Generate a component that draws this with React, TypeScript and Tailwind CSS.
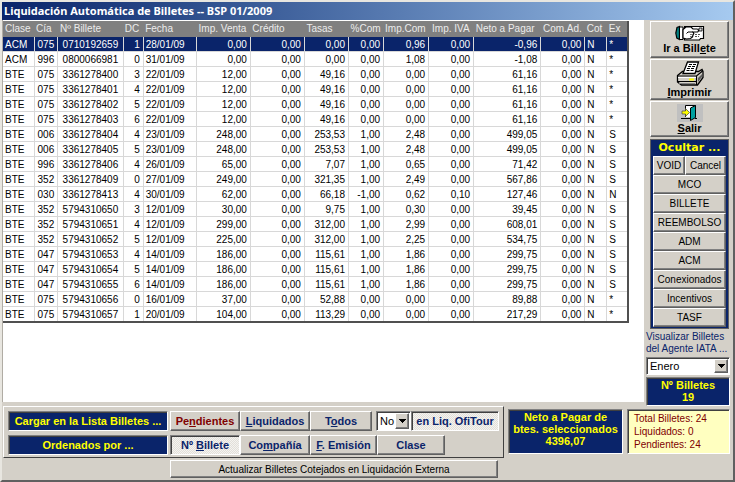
import type { ReactNode } from 'react'

type Row = [string, string, string, string, string, string, string, string, string, string, string, string, string, string, string]

const columns = [
  { title: 'Clase', col: 'w-[31px]', head: 'text-left pl-0.5', cell: 'pl-0.5' },
  { title: 'Cía', col: 'w-[23px]', head: 'text-left pl-0.5', cell: 'pl-[3px]' },
  { title: 'Nº Billete', col: 'w-[66px]', head: 'text-left pl-[3px]', cell: 'pl-[5px]' },
  { title: 'DC', col: 'w-[20px]', head: 'text-right pr-1', cell: 'text-right pr-[3px]' },
  { title: 'Fecha', col: 'w-[53px]', head: 'text-left pl-0.5', cell: 'pl-0.5' },
  { title: 'Imp. Venta', col: 'w-[54px]', head: 'text-right pr-1', cell: 'text-right pr-[3px]' },
  { title: 'Crédito', col: 'w-[54px]', head: 'text-left pl-0.5', cell: 'text-right pr-[3px]' },
  { title: 'Tasas', col: 'w-[44px]', head: 'text-left pl-0.5', cell: 'text-right pr-[3px]' },
  { title: '%Com', col: 'w-[35px]', head: 'text-right pr-[3px]', cell: 'text-right pr-[3px]' },
  { title: 'Imp.Com', col: 'w-[45px]', head: 'text-right pr-[3px]', cell: 'text-right pr-[3px]' },
  { title: 'Imp. IVA', col: 'w-[45px]', head: 'text-right pr-1', cell: 'text-right pr-[3px]' },
  { title: 'Neto a Pagar', col: 'w-[67px]', head: 'text-left pl-0.5', cell: 'text-right pr-[3px]' },
  { title: 'Com.Ad.', col: 'w-[44px]', head: 'text-right pr-[3px]', cell: 'text-right pr-[3px]' },
  { title: 'Cot', col: 'w-[22px]', head: 'text-left pl-0.5', cell: 'pl-0.5' },
  { title: 'Ex', col: 'w-[21px]', head: 'text-left pl-0.5', cell: 'pl-0.5' },
]

const rows: Row[] = [
  ['ACM', '075', '0710192659', '1', '28/01/09', '0,00', '0,00', '0,00', '0,00', '0,96', '0,00', '-0,96', '0,00', 'N', '*'],
  ['ACM', '996', '0800066981', '0', '31/01/09', '0,00', '0,00', '0,00', '0,00', '1,08', '0,00', '-1,08', '0,00', 'N', '*'],
  ['BTE', '075', '3361278400', '3', '22/01/09', '12,00', '0,00', '49,16', '0,00', '0,00', '0,00', '61,16', '0,00', 'N', '*'],
  ['BTE', '075', '3361278401', '4', '22/01/09', '12,00', '0,00', '49,16', '0,00', '0,00', '0,00', '61,16', '0,00', 'N', '*'],
  ['BTE', '075', '3361278402', '5', '22/01/09', '12,00', '0,00', '49,16', '0,00', '0,00', '0,00', '61,16', '0,00', 'N', '*'],
  ['BTE', '075', '3361278403', '6', '22/01/09', '12,00', '0,00', '49,16', '0,00', '0,00', '0,00', '61,16', '0,00', 'N', '*'],
  ['BTE', '006', '3361278404', '4', '23/01/09', '248,00', '0,00', '253,53', '1,00', '2,48', '0,00', '499,05', '0,00', 'N', 'S'],
  ['BTE', '006', '3361278405', '5', '23/01/09', '248,00', '0,00', '253,53', '1,00', '2,48', '0,00', '499,05', '0,00', 'N', 'S'],
  ['BTE', '996', '3361278406', '4', '26/01/09', '65,00', '0,00', '7,07', '1,00', '0,65', '0,00', '71,42', '0,00', 'N', 'S'],
  ['BTE', '352', '3361278409', '0', '27/01/09', '249,00', '0,00', '321,35', '1,00', '2,49', '0,00', '567,86', '0,00', 'N', 'S'],
  ['BTE', '030', '3361278413', '4', '30/01/09', '62,00', '0,00', '66,18', '-1,00', '0,62', '0,10', '127,46', '0,00', 'N', 'N'],
  ['BTE', '352', '5794310650', '3', '12/01/09', '30,00', '0,00', '9,75', '1,00', '0,30', '0,00', '39,45', '0,00', 'N', 'S'],
  ['BTE', '352', '5794310651', '4', '12/01/09', '299,00', '0,00', '312,00', '1,00', '2,99', '0,00', '608,01', '0,00', 'N', 'S'],
  ['BTE', '352', '5794310652', '5', '12/01/09', '225,00', '0,00', '312,00', '1,00', '2,25', '0,00', '534,75', '0,00', 'N', 'S'],
  ['BTE', '047', '5794310653', '4', '14/01/09', '186,00', '0,00', '115,61', '1,00', '1,86', '0,00', '299,75', '0,00', 'N', 'S'],
  ['BTE', '047', '5794310654', '5', '14/01/09', '186,00', '0,00', '115,61', '1,00', '1,86', '0,00', '299,75', '0,00', 'N', 'S'],
  ['BTE', '047', '5794310655', '6', '14/01/09', '186,00', '0,00', '115,61', '1,00', '1,86', '0,00', '299,75', '0,00', 'N', 'S'],
  ['BTE', '075', '5794310656', '0', '16/01/09', '37,00', '0,00', '52,88', '0,00', '0,00', '0,00', '89,88', '0,00', 'N', '*'],
  ['BTE', '075', '5794310657', '1', '20/01/09', '104,00', '0,00', '113,29', '0,00', '0,00', '0,00', '217,29', '0,00', 'N', '*'],
]

const raised = 'bg-[#d4d0c8] border border-t-white border-l-white border-b-[#606060] border-r-[#606060] shadow-[inset_-1px_-1px_0_#808080]'
const sunken = 'border border-t-[#808080] border-l-[#808080] border-b-white border-r-white shadow-[inset_1px_1px_0_#404040]'
const hatch = 'bg-[repeating-conic-gradient(#f4f3f0_0_25%,#e2dfd9_0_50%)] bg-[length:2px_2px]'

function Button({ className = '', children }: { className?: string; children: ReactNode }) {
  return (
    <button type="button" className={`${raised} flex items-center justify-center whitespace-nowrap ${className}`}>
      <span>{children}</span>
    </button>
  )
}

function Pressed({ className = '', children }: { className?: string; children: ReactNode }) {
  return (
    <button type="button" aria-pressed="true" className={`${sunken} ${hatch} flex items-center justify-center whitespace-nowrap ${className}`}>
      <span>{children}</span>
    </button>
  )
}

function Combo({ id, value, label, className = '' }: { id: string; value: string; label?: string; className?: string }) {
  return (
    <div className={`${sunken} relative bg-white ${className}`}>
      <select id={id} aria-label={label} className="block h-full w-full appearance-none bg-transparent pl-[3px] text-[11px] leading-4 font-normal text-black outline-none">
        <option>{value}</option>
      </select>
      <span className={`${raised} pointer-events-none absolute inset-y-px right-px flex w-[14px] items-center justify-center`}>
        <svg width="7" height="4" viewBox="0 0 7 4" shapeRendering="crispEdges"><path d="M0 0h7L3.500 4z" /></svg>
      </span>
    </div>
  )
}

function HandIcon() {
  return (
    <svg width="30" height="16" viewBox="0 0 30 16">
      <path d="M9.500 1.500h19v12h-3l-1 1.500h-15z" fill="#fff" stroke="#000" strokeWidth="1.200" />
      <path d="M24 3h3v3h-3z" fill="#ddd" stroke="#000" strokeWidth=".8" />
      <path d="M20 9.500h6M20 11.500h4" stroke="#555" strokeDasharray="2 1" />
      <path d="M4.500 1.500L2 2.500.8 8l1 5 2.700 1.500z" fill="#008080" stroke="#000" strokeWidth="1.200" />
      <path d="M4.500 2H8v12.500H4.500z" fill="#fff" stroke="#000" />
      <path d="M8 4.500l3-2.500h5l2 2h4a1.500 1.500 0 0 1 0 3h-4l.8 1.500-.8 1.500-.5 2-2 1.500-4 .5L8 13z" fill="#fff" stroke="#000" strokeWidth="1.200" />
      <path d="M18 7h-5l-1.500 1.500" stroke="#000" fill="none" />
      <path d="M18 9.500h-3M17 11.500h-2" stroke="#777" fill="none" />
    </svg>
  )
}

function PrinterIcon() {
  return (
    <svg width="28" height="25" viewBox="0 0 28 25">
      <path d="M1.500 14.500l5-4h16l3.500-2 1 2v6l-5.500 7.500h-16l-4-3z" fill="#d4d0c8" stroke="#000" strokeWidth="1.300" />
      <path d="M7 12.500L11.500 1h11l-3.500 11.500z" fill="#fff" stroke="#000" strokeWidth="1.300" />
      <path d="M13 3.500h7M12 5.500h7M11 7.500h7M10.500 9.500h7" stroke="#000" strokeDasharray="3 1" />
      <path d="M2 15h18.500l6-5M20.500 15.500V24" stroke="#000" fill="none" strokeWidth="1.200" />
      <path d="M22 17l4-4v3l-4 5z" fill="#606060" />
      <path d="M2 16.500h18" stroke="#fff" />
      <path d="M2 20.500h18" stroke="#000" />
      <path d="M3 22.500h16" stroke="#808080" />
      <path d="M13 17.500h5v2h-5z" fill="#ff0" />
    </svg>
  )
}

function ExitIcon() {
  return (
    <svg width="26" height="18" viewBox="0 0 26 18">
      <path d="M0 0h26v18H0z" fill="#c0c0c0" />
      <path d="M8.500 13V1.500h10V13" fill="#fff" stroke="#000" />
      <path d="M18.500 1.500v12l-5 3V4z" fill="#00a0a0" stroke="#000" />
      <path d="M4 14.500h9M18 14.500h2" stroke="#000" />
      <path d="M5 7h3.500V4.500l4 4-4 4V10H5z" fill="#ff0" stroke="#444" strokeWidth=".7" />
    </svg>
  )
}

export default function App() {
  return (
    <div className="flex min-h-screen flex-col border-2 border-t-[#e8e6e0] border-l-[#e8e6e0] border-b-[#606060] border-r-[#606060] bg-[#d4d0c8] font-['Liberation_Sans',Arial,sans-serif] text-black">
      <h1 className="h-[18px] bg-linear-to-r from-[#0a246a] to-[#a6caf0] pl-0.5 font-['Noto_Sans',sans-serif] text-[11px] leading-[18px] font-bold whitespace-nowrap text-white">
        Liquidación Automática de Billetes -- BSP 01/2009
      </h1>

      <div className="flex">
        <main className="mb-1 min-w-0 flex-1 overflow-hidden border-l border-[#b0aca4] bg-white pt-px">
          <table className="w-[626px] table-fixed border-collapse border-r-2 border-b-2 border-[#505050] text-[10px] leading-3">
            <colgroup>
              {columns.map((c) => <col key={c.title} className={c.col} />)}
            </colgroup>
            <thead>
              <tr className="h-4 bg-[#808080] text-[#ececec]">
                {columns.map((c) => (
                  <th key={c.title} className={`font-normal whitespace-nowrap ${c.head}`}>{c.title}</th>
                ))}
              </tr>
            </thead>
            <tbody>
              {rows.map((row, i) => (
                <tr key={row[2]} className={i === 0 ? 'bg-[#0a246a] text-white' : ''}>
                  {row.map((cell, j) => (
                    <td key={j} className={`border-r border-b border-[#d8d8d8] pt-0.5 whitespace-nowrap ${columns[j].cell}`}>{cell}</td>
                  ))}
                </tr>
              ))}
            </tbody>
          </table>
        </main>

        <aside className="flex w-[89px] shrink-0 flex-col pt-px pr-[3px] pl-0.5">
          <div className="flex flex-col gap-px pr-px pl-1 text-[11px] leading-3 font-bold">
            <button type="button" className={`${raised} flex h-[37px] flex-col items-center justify-center gap-px`}>
              <HandIcon />
              <span>Ir a Bill<u>e</u>te</span>
            </button>
            <button type="button" className={`${raised} flex h-[41px] flex-col items-center justify-center`}>
              <PrinterIcon />
              <span><u>I</u>mprimir</span>
            </button>
            <button type="button" className={`${raised} flex h-[36px] flex-col items-center justify-center`}>
              <ExitIcon />
              <span><u>S</u>alir</span>
            </button>
          </div>

          <section className="mt-0.5 mr-px ml-1 border border-[#606060] bg-[#0a246a] px-0.5 pb-px text-[10px]">
            <h2 className="text-center font-['DejaVu_Sans',sans-serif] text-[11px] leading-4 font-bold text-[#ffff00]">Ocultar ...</h2>
            <div className="flex">
              <Button className="h-[19px] w-8">VOID</Button>
              <Button className="h-[19px] flex-1">Cancel</Button>
            </div>
            {['MCO', 'BILLETE', 'REEMBOLSO', 'ADM', 'ACM', 'Conexionados', 'Incentivos', 'TASF'].map((t) => (
              <Button key={t} className="h-[19px] w-full">{t}</Button>
            ))}
          </section>

          <label htmlFor="mes" className="mt-0.5 text-[10px] leading-3 whitespace-nowrap text-[#0a246a]">
            Visualizar Billetes<br />del Agente IATA ...
          </label>
          <Combo id="mes" value="Enero" className="mt-0.5 h-[18px]" />
          <div className={`${sunken} mt-0.5 bg-[#0a246a] pt-px pb-0.5 text-center text-[11px] leading-3 font-bold text-[#ffff00]`}>
            <p>Nº Billetes</p>
            <p>19</p>
          </div>
        </aside>
      </div>

      <footer className="flex gap-1 px-px text-[11px] font-bold">
        <div className="flex w-[501px] flex-col gap-1 border border-t-white border-l-white border-b-[#404040] border-r-[#404040] p-1 pb-0.5 text-[#0a246a]">
          <div className="flex h-5">
            <div className={`${sunken} mr-0.5 w-[160px] bg-[#0a246a] text-center leading-[18px] whitespace-nowrap text-[#ffff00]`}>Cargar en la Lista Billetes ...</div>
            <Button className="w-[70px] text-[#800000]">Pe<u>n</u>dientes</Button>
            <Button className="w-[70px]"><u>L</u>iquidados</Button>
            <Button className="w-[62px]">T<u>o</u>dos</Button>
            <Combo id="liq" label="en Liq. OfiTour" value="No" className="ml-1 w-[35px]" />
            <Pressed className="flex-1">en Liq. OfiTour</Pressed>
          </div>
          <div className="flex h-5">
            <div className={`${sunken} mr-0.5 w-[160px] bg-[#0a246a] text-center leading-[18px] text-[#ffff00]`}>Ordenados por ...</div>
            <Pressed className="w-[70px]">Nº <u>B</u>illete</Pressed>
            <Button className="w-[70px]">Co<u>m</u>pañía</Button>
            <Button className="w-[67px]"><u>F</u>. Emisión</Button>
            <Button className="w-[68px]">Clase</Button>
          </div>
        </div>
        <div className={`${sunken} mt-[3px] mb-1 w-[115px] bg-[#0a246a] pt-px text-center leading-3 whitespace-nowrap text-[#ffff00]`}>
          <p>Neto a Pagar de</p>
          <p>btes. seleccionados</p>
          <p>4396,07</p>
        </div>
        <div className={`${sunken} mt-[3px] mb-1 mr-0.5 flex-1 bg-[#ffffc0] pt-0.5 pl-1.5 text-[10px] leading-[13px] font-normal whitespace-nowrap text-[#800000]`}>
          <p>Total Billetes: 24</p>
          <p>Liquidados: 0</p>
          <p>Pendientes: 24</p>
        </div>
      </footer>

      <Button className="mt-0.5 ml-[168px] h-[18px] w-[328px] text-[10px]">Actualizar Billetes Cotejados en Liquidación Externa</Button>
    </div>
  )
}
